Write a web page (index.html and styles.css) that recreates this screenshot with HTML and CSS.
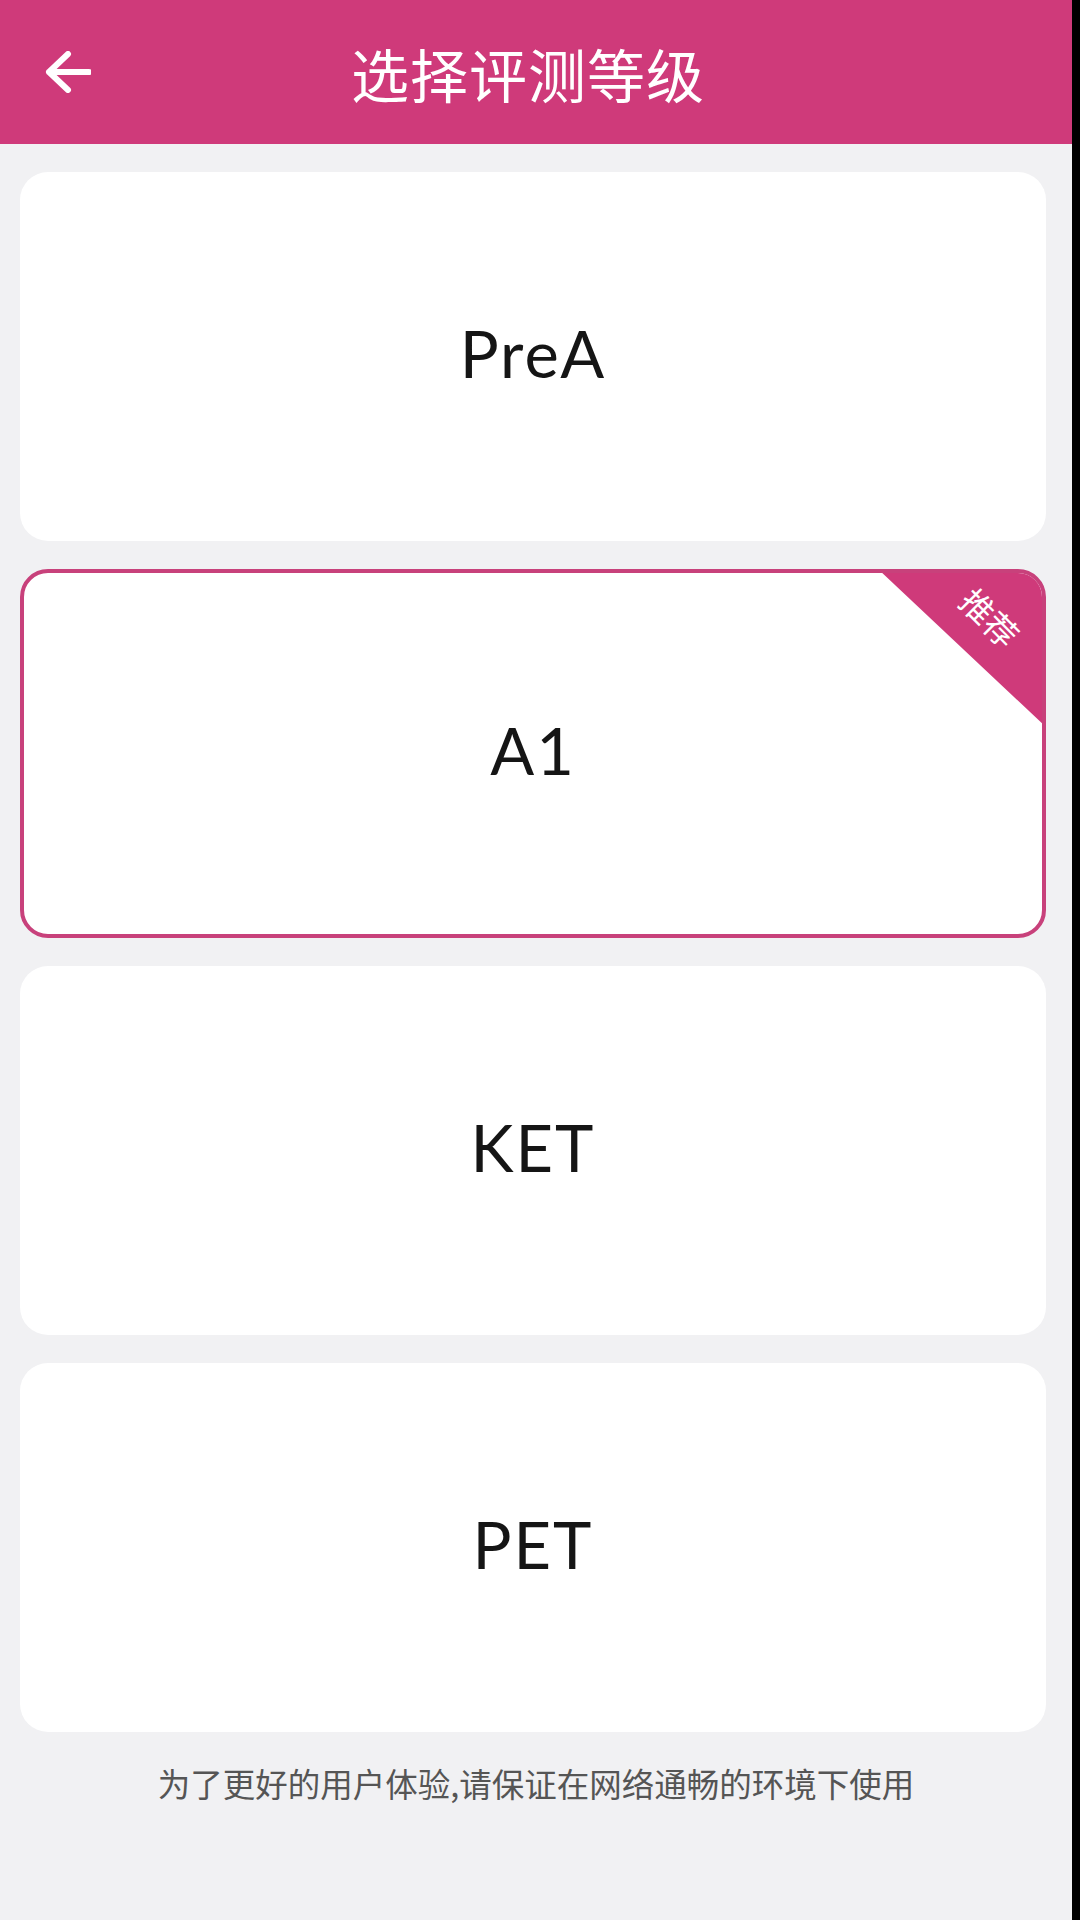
FILE: index.html
```html
<!doctype html>
<html lang="zh-CN">
  <head>
    <meta charset="UTF-8" />
    <title>选择评测等级</title>
    <link rel="stylesheet" href="styles.css">
  </head>
  <body>
    <div class="page">
      <div class="topbar">
        <a class="back" href="#">
          <svg width="46" height="42" viewBox="0 0 46 42">
            <path d="M23 3 L4 21 L23 39 M4 21 L44 21" fill="none" stroke="#fff" stroke-width="6" stroke-linecap="round" stroke-linejoin="round"/>
          </svg>
        </a>
        <h1>选择评测等级</h1>
      </div>

      <div class="levels">
        <div class="level">PreA</div>
        <div class="level selected">
          A1
          <div class="corner"><span>推荐</span></div>
        </div>
        <div class="level">KET</div>
        <div class="level">PET</div>
      </div>

      <p class="tip">为了更好的用户体验,请保证在网络通畅的环境下使用</p>
    </div>
  </body>
</html>
```

FILE: styles.css
```css
body {
  margin: 0;
  background: #000;
  font-family: "Noto Sans CJK SC", "Noto Sans", sans-serif;
}
.page {
  width: 1072px;
  min-height: 1920px;
  background: #f1f1f3;
}
.topbar {
  position: relative;
  height: 144px;
  box-sizing: border-box;
  padding: 44px 16px 0 0;
  background: #cf3a7a;
  text-align: center;
}
.topbar h1 {
  margin: 0;
  font-size: 58px;
  line-height: 58px;
  font-weight: normal;
  letter-spacing: 1px;
  color: #fff;
}
.back {
  position: absolute;
  left: 45px;
  top: 51px;
  display: block;
  line-height: 0;
}
.levels {
  display: flex;
  flex-direction: column;
  gap: 28px;
  padding: 28px 26px 0 20px;
}
.level {
  position: relative;
  height: 369px;
  box-sizing: border-box;
  padding-bottom: 8px;
  display: flex;
  align-items: center;
  justify-content: center;
  background: #fff;
  border-radius: 28px;
  overflow: hidden;
  font-family: Lato, "Noto Sans", sans-serif;
  font-size: 65px;
  letter-spacing: 2px;
  color: #151515;
}
.level.selected {
  border: 4px solid #c8417b;
}
.corner {
  position: absolute;
  top: -4px;
  right: -4px;
  width: 168px;
  height: 158px;
  background: #cf3a7a;
  clip-path: polygon(0 0, 100% 0, 100% 100%);
}
.corner span {
  position: absolute;
  left: 79px;
  top: 32px;
  transform: rotate(45deg);
  font-family: "Noto Sans CJK SC", sans-serif;
  font-size: 33px;
  line-height: 33px;
  letter-spacing: 0;
  color: #fff;
}
.tip {
  margin: 28px 0 0;
  text-align: center;
  font-size: 32.5px;
  line-height: 46px;
  color: #555;
}
```
